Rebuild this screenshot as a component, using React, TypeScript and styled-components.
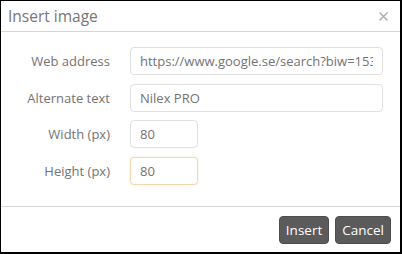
import React from "react";
import styled, { createGlobalStyle, css } from "styled-components";

const GlobalStyle = createGlobalStyle`
  html, body {
    margin: 0;
    padding: 0;
    background: #fff;
  }
  body {
    font-family: "Open Sans", "Noto Sans", sans-serif;
  }
`;

const Dialog = styled.div`
  box-sizing: border-box;
  width: 402px;
  height: 254px;
  border-style: solid;
  border-color: #000;
  border-width: 1px 2px 2px 1px;
  background: #fff;
  display: flex;
  flex-direction: column;
`;

const Header = styled.div`
  height: 30px;
  display: flex;
  align-items: center;
  justify-content: space-between;
  padding: 0 11px 0 7px;
  border-bottom: 1px solid #d6d6d6;
`;

const Title = styled.div`
  font-size: 15.5px;
  color: #777;
`;

const Close = styled.button`
  border: none;
  background: none;
  padding: 0;
  width: 12px;
  height: 12px;
  display: flex;
  align-items: center;
  justify-content: center;
  cursor: pointer;
`;

const Body = styled.div`
  flex: 1;
  padding: 15px 0 0 8px;
  display: grid;
  grid-template-columns: 101px 1fr;
  grid-auto-rows: 28px;
  column-gap: 20px;
  row-gap: 8.7px;
  align-content: start;
  border-bottom: 1px solid #d6d6d6;
`;

const Label = styled.label`
  font-size: 13px;
  color: #737373;
  text-align: right;
  align-self: center;
`;

const Input = styled.input<{ $short?: boolean; $focus?: boolean }>`
  box-sizing: border-box;
  width: ${({ $short }) => ($short ? "68px" : "253px")};
  height: 28px;
  border: 1px solid #e0e0e0;
  border-radius: 4px;
  padding: 0 9px;
  font-family: "Open Sans", "Noto Sans", sans-serif;
  font-size: 13px;
  color: #737373;
  background: #fff;
  outline: none;
  ${({ $focus }) =>
    $focus &&
    css`
      border-color: #f0d9ae;
      box-shadow: 0 0 2px rgba(240, 205, 140, 0.5);
    `}
`;

const Footer = styled.div`
  height: 45px;
  display: flex;
  align-items: center;
  justify-content: flex-end;
  gap: 6px;
  padding: 0 9px 0 0;
`;

const Button = styled.button`
  height: 28px;
  padding: 0 6px;
  border: 1px solid #4d4d4d;
  border-radius: 4px;
  background: #5b5b5b;
  color: #fff;
  font-family: "Open Sans", "Noto Sans", sans-serif;
  font-size: 13.5px;
  cursor: pointer;
`;

const App: React.FC = () => {
  return (
    <>
      <GlobalStyle />
      <Dialog>
        <Header>
          <Title>Insert image</Title>
          <Close aria-label="Close">
            <svg width="9" height="9" viewBox="0 0 9 9">
              <path d="M0.5 0.5 L8.5 8.5 M8.5 0.5 L0.5 8.5" stroke="#a8a8a8" strokeWidth="1.4" />
            </svg>
          </Close>
        </Header>
        <Body>
          <Label>Web address</Label>
          <Input defaultValue="https://www.google.se/search?biw=1536&bih=735" />
          <Label>Alternate text</Label>
          <Input defaultValue="Nilex PRO" />
          <Label>Width (px)</Label>
          <Input $short defaultValue="80" />
          <Label>Height (px)</Label>
          <Input $short $focus defaultValue="80" />
        </Body>
        <Footer>
          <Button>Insert</Button>
          <Button>Cancel</Button>
        </Footer>
      </Dialog>
    </>
  );
};

export default App;
